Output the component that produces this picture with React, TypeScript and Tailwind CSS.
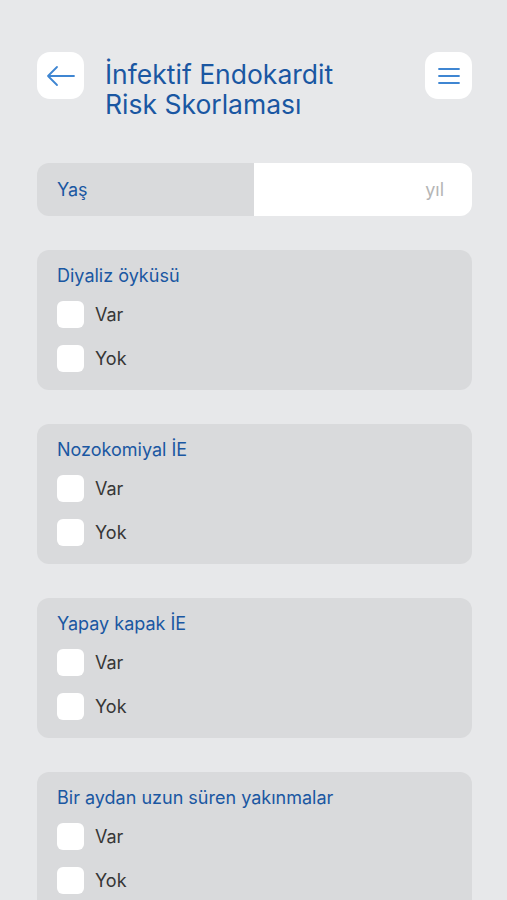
import { useState } from 'react';

const questions = [
  'Diyaliz öyküsü',
  'Nozokomiyal İE',
  'Yapay kapak İE',
  'Bir aydan uzun süren yakınmalar',
];

function OptionRow({ label, checked, onToggle }: { label: string; checked: boolean; onToggle: () => void }) {
  return (
    <button type="button" onClick={onToggle} className="flex items-center gap-[11px] text-left">
      <span className="flex h-[27px] w-[27px] items-center justify-center rounded-[6px] bg-white">
        {checked && <span className="h-[13px] w-[13px] rounded-[3px] bg-[#1b59a4]" />}
      </span>
      <span className="text-[18px] leading-[20px] text-[#363636]">{label}</span>
    </button>
  );
}

export default function App() {
  const [answers, setAnswers] = useState<Record<number, string>>({});

  return (
    <div className="min-h-[900px] bg-[#e7e8ea] pl-[37px] pr-[35px] pt-[52px]" style={{ fontFamily: 'Inter, "Noto Sans", sans-serif' }}>
      {/* Header */}
      <div className="flex items-start">
        <button className="flex h-[47px] w-[47px] shrink-0 items-center justify-center rounded-[13px] bg-white">
          <svg width="30" height="22" viewBox="0 0 30 22" fill="none" stroke="#3f86d2" strokeWidth="1.8" strokeLinecap="round" strokeLinejoin="round">
            <path d="M28 11H2M11 2L2 11L11 20" />
          </svg>
        </button>
        <h1 className="ml-[21px] mt-[7px] flex-1 text-[26.5px] leading-[30px] font-normal text-[#1a57a2]">
          İnfektif Endokardit
          <br />
          Risk Skorlaması
        </h1>
        <button className="flex h-[47px] w-[47px] shrink-0 items-center justify-center rounded-[13px] bg-white">
          <svg width="22" height="18" viewBox="0 0 22 18" fill="none" stroke="#3f86d2" strokeWidth="1.8" strokeLinecap="round">
            <path d="M1 2H21M1 9H21M1 16H21" />
          </svg>
        </button>
      </div>

      {/* Age */}
      <div className="mt-[44px] flex h-[53px] overflow-hidden rounded-[12px]">
        <div className="flex w-[217px] items-center bg-[#d9dadc] pl-[20px] text-[18px] text-[#1a57a2]">Yaş</div>
        <div className="flex flex-1 items-center justify-end bg-white pr-[28px] text-[18px] text-[#b5b5b5]">yıl</div>
      </div>

      {/* Questions */}
      <div className="mt-[34px] flex flex-col gap-[34px]">
        {questions.map((q, i) => (
          <div key={q} className="h-[140px] rounded-[12px] bg-[#d9dadc] px-[20px] pt-[16px]">
            <div className="text-[18px] leading-[20px] text-[#1a57a2]">{q}</div>
            <div className="mt-[15px] flex flex-col gap-[17px]">
              {['Var', 'Yok'].map((opt) => (
                <OptionRow
                  key={opt}
                  label={opt}
                  checked={answers[i] === opt}
                  onToggle={() => setAnswers({ ...answers, [i]: opt })}
                />
              ))}
            </div>
          </div>
        ))}
      </div>
    </div>
  );
}
